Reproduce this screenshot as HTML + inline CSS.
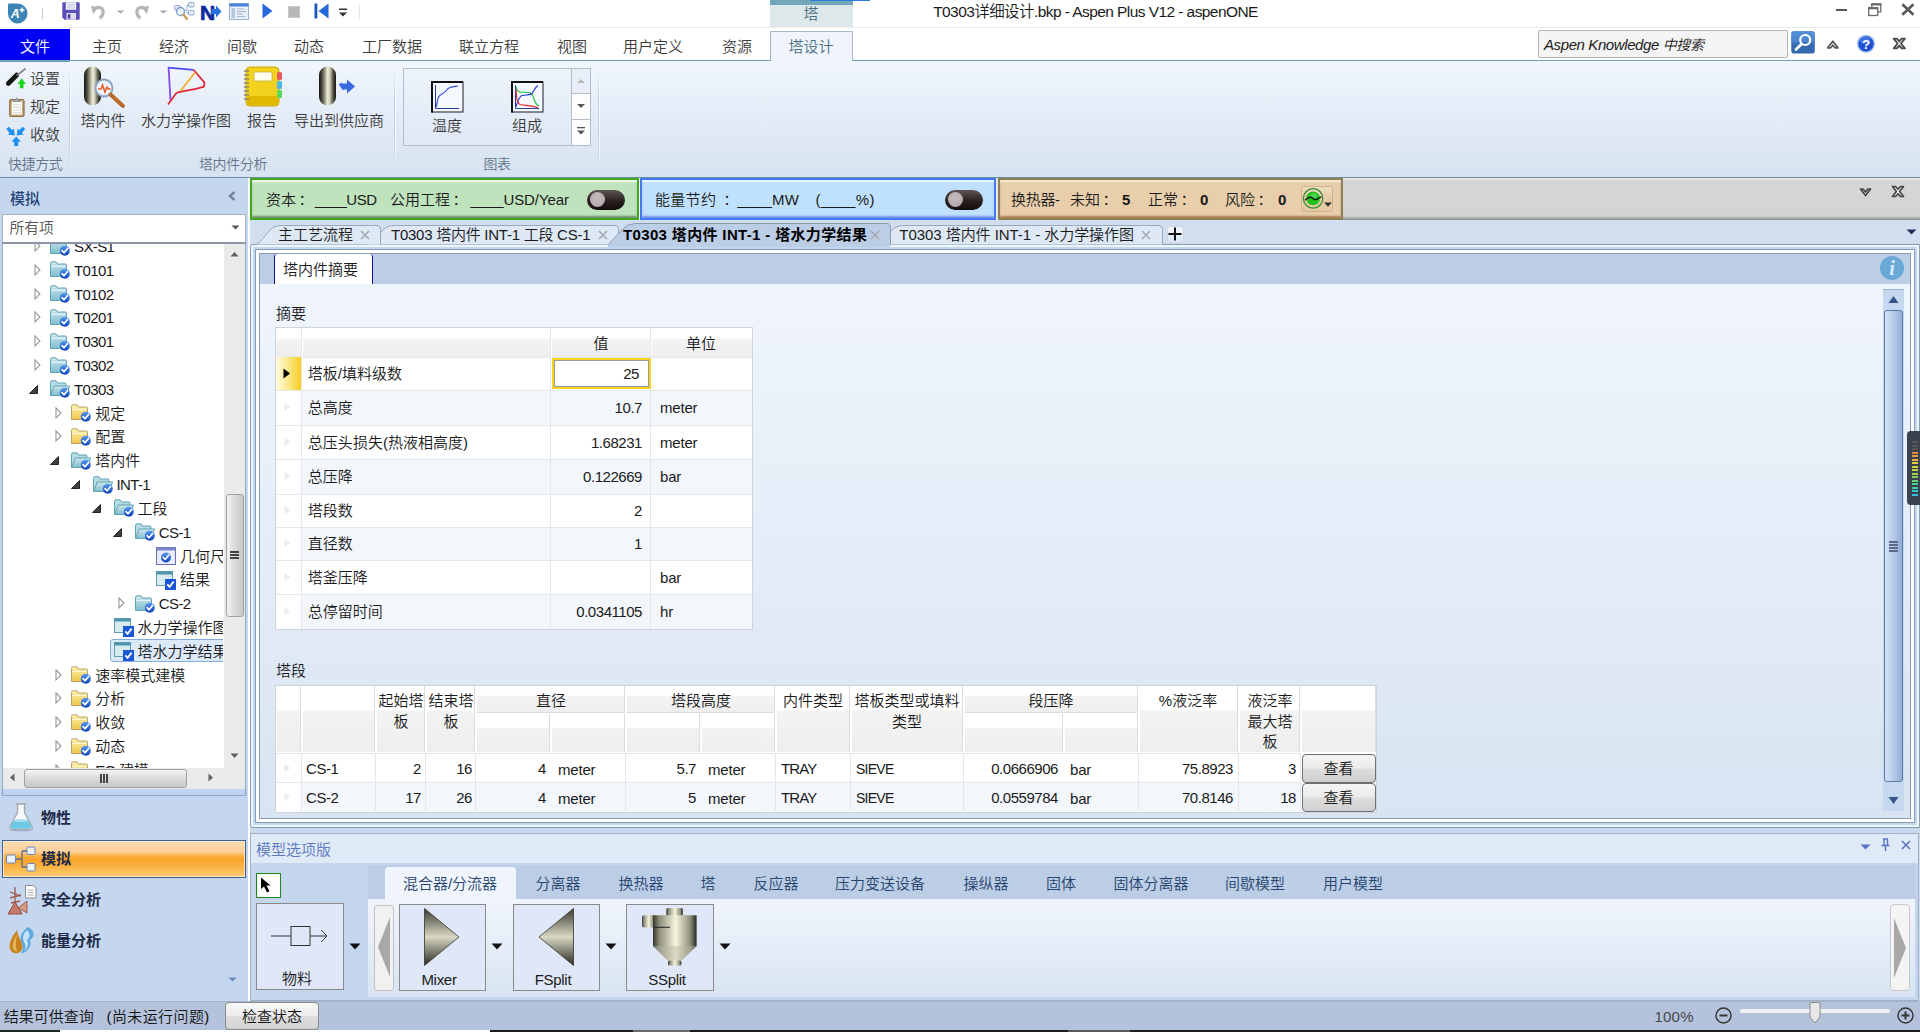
<!DOCTYPE html>
<html lang="zh-CN"><head><meta charset="utf-8"><title>T0303详细设计.bkp - Aspen Plus V12 - aspenONE</title>
<style>
html,body{margin:0;padding:0}
body{width:1920px;height:1032px;position:relative;overflow:hidden;background:#c5d7ee;
font-family:"Liberation Sans","Noto Sans CJK SC",sans-serif;font-size:15px;font-weight:350;color:#1e1e1e}
body div,body svg{position:absolute;box-sizing:border-box}
.t{white-space:nowrap}
svg{overflow:visible}
svg text{font-family:"Liberation Sans","Noto Sans CJK SC",sans-serif}
</style></head><body>
<svg width="0" height="0" style="left:0;top:0"><defs>
<linearGradient id="gBlueBall" x1="0" y1="0" x2="0" y2="1"><stop offset="0" stop-color="#5b9bf0"/><stop offset="1" stop-color="#0a3fb5"/></linearGradient>
<linearGradient id="gTeal" x1="0" y1="0" x2="0" y2="1"><stop offset="0" stop-color="#cfe8ee"/><stop offset="1" stop-color="#7fbccc"/></linearGradient>
<linearGradient id="gYel" x1="0" y1="0" x2="0" y2="1"><stop offset="0" stop-color="#fdf0b0"/><stop offset="1" stop-color="#efc84a"/></linearGradient>
<linearGradient id="gMetal" x1="0" y1="0" x2="1" y2="0"><stop offset="0" stop-color="#14140f"/><stop offset="0.18" stop-color="#4a4a3e"/><stop offset="0.5" stop-color="#eaead4"/><stop offset="0.62" stop-color="#d4d4be"/><stop offset="0.85" stop-color="#4a4a3e"/><stop offset="1" stop-color="#14140f"/></linearGradient>
<linearGradient id="gMetal2" x1="0" y1="0" x2="1" y2="0"><stop offset="0" stop-color="#34342a"/><stop offset="0.14" stop-color="#8c8c7a"/><stop offset="0.52" stop-color="#f6f6de"/><stop offset="0.86" stop-color="#8c8c7a"/><stop offset="1" stop-color="#26261e"/></linearGradient>
<linearGradient id="gCone" x1="0" y1="0" x2="0" y2="1"><stop offset="0" stop-color="#3a3a30"/><stop offset="0.5" stop-color="#d8d8c4"/><stop offset="1" stop-color="#2a2a22"/></linearGradient>
<linearGradient id="gBtn" x1="0" y1="0" x2="0" y2="1"><stop offset="0" stop-color="#f6f6f6"/><stop offset="0.5" stop-color="#e8e8e8"/><stop offset="0.5" stop-color="#dcdcdc"/><stop offset="1" stop-color="#d0d0d0"/></linearGradient>
<g id="chk"><circle cx="0" cy="0" r="5" fill="url(#gBlueBall)"/><path d="M-2.8,-0.2 L-0.8,2 L2.8,-2.4" fill="none" stroke="#fff" stroke-width="1.6" stroke-linecap="round" stroke-linejoin="round"/></g>
<symbol id="fb" viewBox="0 0 21 19" overflow="visible"><path d="M0.5,2.5 Q0.5,0.8 2,0.8 L6,0.8 L7.6,3 L15.5,3 Q16.5,3 16.5,4.2 L16.5,15.5 L0.5,15.5 Z" fill="url(#gTeal)" stroke="#5fa3b5" stroke-width="1"/><path d="M1.5,5.5 L15.5,5.5" stroke="#e6f4f7" stroke-width="1"/><use href="#chk" x="14.8" y="12.8"/></symbol>
<symbol id="fbo" viewBox="0 0 21 19" overflow="visible"><path d="M0.5,2.5 Q0.5,0.8 2,0.8 L6,0.8 L7.6,3 L15,3 Q16,3 16,4.2 L16,6 L0.5,15.5 Z" fill="#b5dbe4" stroke="#5fa3b5" stroke-width="1"/><path d="M0.6,15.5 L4.2,6 L19.5,6 L16.5,15.5 Z" fill="url(#gTeal)" stroke="#5fa3b5" stroke-width="1"/><use href="#chk" x="14.8" y="12.8"/></symbol>
<symbol id="fy" viewBox="0 0 21 19" overflow="visible"><path d="M0.5,2.5 Q0.5,0.8 2,0.8 L6,0.8 L7.6,3 L15.5,3 Q16.5,3 16.5,4.2 L16.5,15.5 L0.5,15.5 Z" fill="url(#gYel)" stroke="#b9a06a" stroke-width="1"/><path d="M1.5,5.5 L15.5,5.5" stroke="#fff8d8" stroke-width="1"/><use href="#chk" x="14.8" y="12.8"/></symbol>
<symbol id="frm" viewBox="0 0 21 19" overflow="visible"><rect x="0.5" y="0.5" width="16" height="14" fill="#d6ecf0" stroke="#5f9fb0"/><rect x="0.5" y="0.5" width="16" height="3" fill="#4f96aa"/><rect x="9" y="8" width="11" height="11" fill="#1a56d6"/><path d="M11.3,13.3 L13.6,15.8 L17.6,10.6" fill="none" stroke="#fff" stroke-width="1.8"/></symbol>
<symbol id="frm2" viewBox="0 0 21 19" overflow="visible"><rect x="0.5" y="0.5" width="19" height="17" fill="#e9ecfa" stroke="#6a6fb5"/><rect x="0.5" y="0.5" width="19" height="3" fill="#7f86c8"/><use href="#chk" x="10" y="10.5"/></symbol>
<symbol id="ar" viewBox="0 0 8 12" overflow="visible"><path d="M1,1 L6,6 L1,11 Z" fill="#fff" stroke="#989898" stroke-width="1.100"/></symbol>
<symbol id="ad" viewBox="0 0 10 10" overflow="visible"><path d="M8.5,0.5 L8.5,8.5 L0.5,8.5 Z" fill="#404040" stroke="#262626" stroke-width="1"/></symbol>
</defs></svg>
<div style="left:0px;top:0px;width:1920px;height:29px;background:#fff"></div>
<div style="left:0px;top:27px;width:1920px;height:1px;background:#e9ece9"></div>
<div style="left:770px;top:0px;width:83px;height:27px;background:#dde8ea"></div>
<div style="left:770px;top:0px;width:83px;height:5px;background:#72a6b8"></div>
<div style="left:810px;top:0px;width:60px;height:1px;background:#2a7be0"></div>
<div class="t" style="top:4px;line-height:20px;font-size:15px;color:#4a7080;left:811px;transform:translateX(-50%);">塔</div>
<div class="t" style="top:1.5px;line-height:20px;font-size:15.5px;color:#1a1a1a;left:1095.5px;transform:translateX(-50%);letter-spacing:-0.57px">T0303详细设计.bkp - Aspen Plus V12 - aspenONE</div>
<div style="left:1836px;top:9px;width:11px;height:2px;background:#555"></div>
<svg style="left:1868px;top:3px;" width="14" height="13" viewBox="0 0 14 13"><path d="M3.800,4 V0.800 H12.800 V8.800 H10" fill="none" stroke="#6a6a6a" stroke-width="1.300"/><path d="M3.200,1.500 H13.400" stroke="#6a6a6a" stroke-width="2"/><rect x="0.700" y="4.700" width="9" height="7.800" fill="#fff" stroke="#6a6a6a" stroke-width="1.300"/><path d="M0.100,5.300 H10.300" stroke="#6a6a6a" stroke-width="2"/></svg>
<svg style="left:1900.5px;top:3px;" width="14" height="13" viewBox="0 0 14 13"><path d="M1.300,1.300 L12.500,11.800 M12.500,1.300 L1.300,11.800" stroke="#5c5c5c" stroke-width="2.700" stroke-linecap="butt"/></svg>
<svg style="left:7px;top:3px;" width="22" height="21" viewBox="0 0 22 21"><path d="M1,1.500 Q1,0.500 2.500,0.500 H10.500 A10,10 0 0 1 20.500,10.500 A10,10 0 0 1 10.500,20.500 A9.800,9.800 0 0 1 1,10.500 Z" fill="#3d84b6"/><text x="3.800" y="15.300" font-size="12.500" font-weight="bold" font-style="italic" fill="#fff">A</text><path d="M15,3.800 l1,2.200 l2.200,1 l-2.200,1 l-1,2.200 l-1,-2.200 l-2.200,-1 l2.200,-1 z" fill="#fff"/></svg>
<div style="left:42px;top:8px;width:1px;height:11px;background:#c8c8c8"></div>
<svg style="left:62px;top:2px;" width="18" height="18" viewBox="0 0 18 18"><path d="M1.500,0.300 H16.500 Q17.700,0.300 17.700,1.500 V16.500 Q17.700,17.700 16.500,17.700 H2.500 L0.300,15.500 V1.500 Q0.300,0.300 1.500,0.300 Z" fill="#5a50b8"/><rect x="3.800" y="0.300" width="10.400" height="7.500" fill="#f4f4fb"/><path d="M5,2.300 h8 M5,4.200 h8 M5,6 h8" stroke="#c4c4e0" stroke-width="0.900"/><rect x="4.500" y="11" width="9.500" height="6.700" fill="#dedeee"/><rect x="5.800" y="12.200" width="2.600" height="4.500" fill="#4a40a8"/></svg>
<svg style="left:91px;top:4px;" width="16" height="16" viewBox="0 0 16 16"><path d="M3,5.5 C8,1.5 13,4 12,9 C11.5,12 10,13.5 8.5,14" fill="none" stroke="#b6b6b6" stroke-width="3.200"/><path d="M0,2 L7.500,3 L2,10 Z" fill="#b6b6b6"/></svg>
<svg style="left:116px;top:8.5px;" width="10" height="5" viewBox="0 0 10 5"><path d="M0.5,1.5 h8 l-4,3 z" fill="#a8a8a8"/></svg>
<svg style="left:133px;top:4px;" width="16" height="16" viewBox="0 0 16 16"><path d="M13,5.5 C8,1.5 3,4 4,9 C4.5,12 6,13.5 7.5,14" fill="none" stroke="#b6b6b6" stroke-width="3.200"/><path d="M16,2 L8.500,3 L14,10 Z" fill="#b6b6b6"/></svg>
<svg style="left:159px;top:8.5px;" width="10" height="5" viewBox="0 0 10 5"><path d="M0.5,1.5 h8 l-4,3 z" fill="#a8a8a8"/></svg>
<svg style="left:173px;top:2px;" width="22" height="19" viewBox="0 0 22 19"><path d="M9,8 h5 v-5 h3 M14,8 v3 h3" fill="none" stroke="#9ab4d0" stroke-width="1"/><rect x="15.5" y="0.5" width="5.5" height="4.5" rx="1" fill="#e3edf8" stroke="#8aa8cc"/><rect x="15.5" y="8.5" width="5.5" height="4.5" rx="1" fill="#e3edf8" stroke="#8aa8cc"/><rect x="1.500" y="3.500" width="5.500" height="4.500" rx="1" fill="#e3edf8" stroke="#8aa8cc"/><circle cx="7.500" cy="9.500" r="4" fill="#e8f2fb" fill-opacity="0.8" stroke="#7d9cc0" stroke-width="1.300"/><path d="M10.5,12.500 L14,17" stroke="#c89a50" stroke-width="2.200" stroke-linecap="round"/></svg>
<svg style="left:200px;top:3px;" width="22" height="17" viewBox="0 0 22 17"><text x="0" y="16.500" font-size="21" font-weight="bold" fill="#0c2c9c" stroke="#0c2c9c" stroke-width="0.700">N</text><path d="M11,6 h5 v-3.500 l5.500,6 l-5.500,6 v-3.500 h-5 z" fill="#2a6fe0"/></svg>
<svg style="left:229px;top:3px;" width="20" height="17" viewBox="0 0 20 17"><rect x="0.5" y="0.5" width="19" height="16" fill="#e6eef8" stroke="#9ab4d4"/><rect x="0.5" y="0.5" width="19" height="3" fill="#4a86d8"/><rect x="2.5" y="5" width="3.500" height="10" fill="#b4c8e0"/><path d="M8,6 h7 M8,8.500 h9 M8,11 h6 M8,13.500 h8" stroke="#a8b8cc" stroke-width="1"/></svg>
<svg style="left:262px;top:3px;" width="11" height="16" viewBox="0 0 11 16"><path d="M0.500,0.500 L10.500,8 L0.500,15.500 Z" fill="#2468dc"/></svg>
<div style="left:288px;top:6px;width:12px;height:12px;background:#b8b8b8;border:1px solid #c8c8c8"></div>
<svg style="left:314px;top:3px;" width="15" height="16" viewBox="0 0 15 16"><rect x="0.500" y="0.500" width="2.800" height="15" fill="#1e56b8"/><path d="M14.500,0.500 L4.500,8 L14.500,15.500 Z" fill="#2468dc"/></svg>
<svg style="left:338px;top:8px;" width="10" height="9" viewBox="0 0 10 9"><rect x="1" y="0.500" width="8" height="1.500" fill="#333"/><path d="M1,4.500 h8 l-4,4 z" fill="#333"/></svg>
<div style="left:359px;top:5px;width:1px;height:14px;background:#e4e4e4"></div>
<div style="left:0px;top:28px;width:1920px;height:33px;background:#fff"></div>
<div style="left:0px;top:29px;width:70px;height:32px;background:#0000f5"></div>
<div class="t" style="top:37px;line-height:20px;font-size:15px;color:#fff;left:35px;transform:translateX(-50%);">文件</div>
<div class="t" style="top:37px;line-height:20px;font-size:15px;color:#3c3c3c;left:107px;transform:translateX(-50%);">主页</div>
<div class="t" style="top:37px;line-height:20px;font-size:15px;color:#3c3c3c;left:174px;transform:translateX(-50%);">经济</div>
<div class="t" style="top:37px;line-height:20px;font-size:15px;color:#3c3c3c;left:242px;transform:translateX(-50%);">间歇</div>
<div class="t" style="top:37px;line-height:20px;font-size:15px;color:#3c3c3c;left:309px;transform:translateX(-50%);">动态</div>
<div class="t" style="top:37px;line-height:20px;font-size:15px;color:#3c3c3c;left:392px;transform:translateX(-50%);">工厂数据</div>
<div class="t" style="top:37px;line-height:20px;font-size:15px;color:#3c3c3c;left:489px;transform:translateX(-50%);">联立方程</div>
<div class="t" style="top:37px;line-height:20px;font-size:15px;color:#3c3c3c;left:572px;transform:translateX(-50%);">视图</div>
<div class="t" style="top:37px;line-height:20px;font-size:15px;color:#3c3c3c;left:653px;transform:translateX(-50%);">用户定义</div>
<div class="t" style="top:37px;line-height:20px;font-size:15px;color:#3c3c3c;left:737px;transform:translateX(-50%);">资源</div>
<div style="left:770px;top:31px;width:83px;height:31px;background:#f0f5fd;border:1px solid #a9b7c6;border-bottom:none"></div>
<div class="t" style="top:37px;line-height:20px;font-size:15px;color:#4a7080;left:811px;transform:translateX(-50%);">塔设计</div>
<div style="left:1538px;top:30px;width:250px;height:28px;background:#f4f4f4;border:1px solid #b4b4b4;border-radius:2px"></div>
<div class="t" style="top:35px;line-height:20px;font-size:15px;color:#1a1a1a;left:1544px;font-style:italic;letter-spacing:-0.4px">Aspen Knowledge <span style="font-size:14px">中搜索</span></div>
<svg style="left:1791px;top:31px;" width="24" height="23" viewBox="0 0 24 23"><rect x="0.300" y="0.300" width="23.500" height="22.300" rx="2.500" fill="#3569ae"/><rect x="0.300" y="0.300" width="23.500" height="11" rx="2.500" fill="#5a9ae2" fill-opacity="0.750"/><rect x="0.300" y="6" width="23.500" height="8" fill="#4580c8" fill-opacity="0.500"/><circle cx="14.200" cy="9" r="5" fill="none" stroke="#fff" stroke-width="2.200"/><path d="M10.300,13.200 L5,18.500" stroke="#fff" stroke-width="2.800" stroke-linecap="round"/></svg>
<svg style="left:1826px;top:39px;" width="14" height="11" viewBox="0 0 14 11"><path d="M1.700,8.800 L6.800,2.200 L11.900,8.800 L9,8.800 L6.800,6.200 L4.600,8.800 Z" fill="#fff" stroke="#555" stroke-width="1.700" stroke-linejoin="round"/></svg>
<svg style="left:1856px;top:34px;" width="20" height="20" viewBox="0 0 20 20"><circle cx="10" cy="9.800" r="8.400" fill="#1d4fd2" stroke="#a4c0ec" stroke-width="1.500"/><ellipse cx="9" cy="6.500" rx="5.500" ry="3.800" fill="#5a8af0" fill-opacity="0.550"/><text x="10.200" y="14.800" font-size="13.500" font-weight="bold" fill="#fff" text-anchor="middle">?</text></svg>
<svg style="left:1892px;top:37px;" width="15" height="13" viewBox="0 0 15 13"><path d="M1.700,1.600 L4.900,1.600 L7.300,4.400 L9.700,1.600 L12.900,1.600 L9,6.500 L12.900,11.400 L9.700,11.400 L7.300,8.600 L4.900,11.400 L1.700,11.400 L5.600,6.500 Z" fill="#fff" stroke="#4c4c4c" stroke-width="1.900" stroke-linejoin="round"/></svg>
<div style="left:0px;top:60px;width:1920px;height:117.5px;background:linear-gradient(#f1f6fe,#e4ecf7 45%,#d7e3f1);border-top:1.500px solid #6fa2b6;border-bottom:1.500px solid #6c8d9d"></div>
<div style="left:0px;top:60px;width:70px;height:1.5px;background:#6fa2b6"></div>
<div style="left:771px;top:60px;width:81px;height:1.5px;background:#f0f5fd"></div>
<div style="left:69px;top:66px;width:1px;height:106px;background:linear-gradient(rgba(200,212,228,0),#c4d0e2 30%,#c4d0e2 70%,rgba(200,212,228,0))"></div>
<div style="left:70px;top:66px;width:1px;height:106px;background:linear-gradient(rgba(255,255,255,0),#f6f9fd 30%,#f6f9fd 70%,rgba(255,255,255,0))"></div>
<div style="left:394px;top:66px;width:1px;height:106px;background:linear-gradient(rgba(200,212,228,0),#c4d0e2 30%,#c4d0e2 70%,rgba(200,212,228,0))"></div>
<div style="left:395px;top:66px;width:1px;height:106px;background:linear-gradient(rgba(255,255,255,0),#f6f9fd 30%,#f6f9fd 70%,rgba(255,255,255,0))"></div>
<div style="left:598px;top:66px;width:1px;height:106px;background:linear-gradient(rgba(200,212,228,0),#c4d0e2 30%,#c4d0e2 70%,rgba(200,212,228,0))"></div>
<div style="left:599px;top:66px;width:1px;height:106px;background:linear-gradient(rgba(255,255,255,0),#f6f9fd 30%,#f6f9fd 70%,rgba(255,255,255,0))"></div>
<svg style="left:0px;top:62px;" width="30" height="30" viewBox="0 0 30 30"><path d="M8.300,21.500 L16.800,13" stroke="#151515" stroke-width="4.600" stroke-linecap="round"/><path d="M17.500,13 L25,7" stroke="#8a8a8a" stroke-width="1.800" stroke-linecap="round"/><path d="M21.700,16.300 l4.200,5.700 h-2.400 v4.200 h-3.600 v-4.200 h-2.400 z" fill="#18d818"/></svg>
<div class="t" style="top:69px;line-height:20px;font-size:15px;color:#3c3c3c;left:30px;">设置</div>
<svg style="left:8px;top:96px;" width="18" height="22" viewBox="0 0 18 22"><rect x="1.700" y="3.500" width="14.300" height="17" rx="1.500" fill="#c9a878" stroke="#8a6c44" stroke-width="1.200"/><rect x="3.800" y="5.500" width="10.200" height="13" fill="#fcfcf8"/><path d="M5,9 h8 M5,11.500 h8 M5,14 h8 M5,16.500 h8" stroke="#d8d8d4" stroke-width="1"/><path d="M5.500,5.500 Q5.500,3.500 7.500,3.300 Q8.800,0.800 10.200,3.300 Q12.200,3.500 12.200,5.500 Z" fill="#a8a8a8" stroke="#777" stroke-width="0.700"/></svg>
<div class="t" style="top:97px;line-height:20px;font-size:15px;color:#3c3c3c;left:30px;">规定</div>
<svg style="left:5px;top:126px;" width="22" height="21" viewBox="0 0 22 21"><g fill="#1e8ef0"><path d="M1.300,3 L3.800,0.700 L7.300,4.200 L8.800,2.600 L9.800,9.600 L2.800,8.600 L4.600,6.700 Z"/><path d="M20.200,3 L17.700,0.700 L14.200,4.200 L12.700,2.600 L11.700,9.600 L18.700,8.600 L16.900,6.700 Z"/><path d="M11.200,10.500 l4.800,5.300 h-2.800 v4.200 h-4 v-4.200 h-2.800 z"/></g></svg>
<div class="t" style="top:125px;line-height:20px;font-size:15px;color:#3c3c3c;left:30px;">收敛</div>
<div class="t" style="top:154px;line-height:20px;font-size:14px;color:#65748a;left:8px;letter-spacing:-0.4px">快捷方式</div>
<svg style="left:83px;top:66px;" width="44" height="42" viewBox="0 0 44 42"><rect x="1" y="0.500" width="17" height="39" rx="8.500" fill="url(#gMetal)"/><circle cx="21" cy="22" r="8.500" fill="#eef4fc" stroke="#8aa0c0" stroke-width="1.800"/><path d="M15,23 l3,0 l1.500,-4 l2.500,7 l2,-5 l1.500,2 l2,0" fill="none" stroke="#e85a2a" stroke-width="1.600"/><path d="M27.500,28.500 L40,40" stroke="#b86a28" stroke-width="4" stroke-linecap="round"/></svg>
<div class="t" style="top:111px;line-height:20px;font-size:15px;color:#3c3c3c;left:103px;transform:translateX(-50%);">塔内件</div>
<svg style="left:160px;top:60px;" width="50" height="50" viewBox="0 0 50 50"><path d="M8,7.700 L33.600,9.800" stroke="#4a4af0" stroke-width="1.800" fill="none"/><path d="M8.600,7.700 L10.500,40.400" stroke="#8a4af0" stroke-width="1.800" fill="none"/><path d="M33.600,9.800 L44.500,22.600 L44,26.600 C36,29.500 22,31 16.400,33 L8,44.400" stroke="#e02838" stroke-width="1.700" fill="none" stroke-linejoin="round"/><path d="M35,12.500 L20.500,31" stroke="#f5a818" stroke-width="1.600" fill="none"/></svg>
<div class="t" style="top:111px;line-height:20px;font-size:15px;color:#3c3c3c;left:186px;transform:translateX(-50%);">水力学操作图</div>
<svg style="left:243px;top:66px;" width="40" height="42" viewBox="0 0 40 42"><rect x="3" y="1" width="33" height="39" rx="4" fill="#f2d21c" stroke="#c8a800" stroke-width="1"/><rect x="3" y="30" width="33" height="10" rx="4" fill="#e0b800"/><rect x="34" y="6" width="5" height="8" rx="1.500" fill="#e85a5a"/><rect x="34" y="15" width="5" height="8" rx="1.500" fill="#4ab8e8"/><rect x="34" y="24" width="5" height="8" rx="1.500" fill="#5ad85a"/><rect x="11" y="6" width="18" height="9" rx="1" fill="#fffef0" stroke="#c8b040" stroke-width="0.800"/><path d="M1,5 h5 M1,9 h5 M1,13 h5 M1,17 h5 M1,21 h5 M1,25 h5 M1,29 h5 M1,33 h5" stroke="#8a8a6a" stroke-width="1.600"/></svg>
<div class="t" style="top:111px;line-height:20px;font-size:15px;color:#3c3c3c;left:262px;transform:translateX(-50%);">报告</div>
<svg style="left:318px;top:66px;" width="40" height="42" viewBox="0 0 40 42"><rect x="1" y="0.500" width="17" height="39" rx="8.500" fill="url(#gMetal)"/><path d="M22,17.500 h7 v-4 l8,7 l-8,7 v-4 h-3 z" fill="#3a6ae0"/><path d="M22,17.500 l4,6" stroke="#3a6ae0" stroke-width="3"/></svg>
<div class="t" style="top:111px;line-height:20px;font-size:15px;color:#3c3c3c;left:339px;transform:translateX(-50%);">导出到供应商</div>
<div class="t" style="top:154px;line-height:20px;font-size:14px;color:#65748a;left:233px;transform:translateX(-50%);letter-spacing:-0.4px">塔内件分析</div>
<div style="left:403px;top:68px;width:188px;height:78px;background:linear-gradient(#edf3fb,#dfe8f5);border:1px solid #b4bccc"></div>
<div style="left:571px;top:68px;width:20px;height:78px;background:#fdfdfe;border:1px solid #b4bccc"></div>
<div style="left:572px;top:69px;width:18px;height:24px;background:#e9eff9"></div>
<div style="left:571px;top:93px;width:20px;height:1px;background:#b4bccc"></div>
<div style="left:571px;top:119px;width:20px;height:1px;background:#b4bccc"></div>
<svg style="left:576px;top:78px;" width="10" height="6" viewBox="0 0 10 6"><path d="M1,5 L5,1 L9,5 Z" fill="#b8b8b8"/></svg>
<svg style="left:576px;top:103px;" width="10" height="6" viewBox="0 0 10 6"><path d="M1,1 L5,5 L9,1 Z" fill="#555"/></svg>
<svg style="left:576px;top:126px;" width="10" height="10" viewBox="0 0 10 10"><rect x="1" y="1" width="8" height="1.300" fill="#555"/><path d="M1,4.500 L5,8.500 L9,4.500 Z" fill="#555"/></svg>
<svg style="left:431px;top:81px;" width="33" height="32" viewBox="0 0 33 32"><rect x="1" y="1" width="31" height="30" fill="#f4f8ff" stroke="#1a1a2a" stroke-width="1"/><path d="M0,1 H32 M1,0 V31.500" stroke="#111" stroke-width="2"/><path d="M4.500,4 V27.500 H28" fill="none" stroke="#2a3a90" stroke-width="1"/><path d="M5.500,26 C6.500,16 8,14.500 11,13 C15,11.500 15.500,7.500 19,6.500 C22,5.500 24,5.500 27,5" fill="none" stroke="#2848e0" stroke-width="1.100"/></svg>
<div class="t" style="top:116px;line-height:20px;font-size:15px;color:#3c3c3c;left:447px;transform:translateX(-50%);">温度</div>
<svg style="left:511px;top:81px;" width="33" height="32" viewBox="0 0 33 32"><rect x="1" y="1" width="31" height="30" fill="#f4f8ff" stroke="#1a1a2a" stroke-width="1"/><path d="M0,1 H32 M1,0 V31.500" stroke="#111" stroke-width="2"/><path d="M4.500,4 V27.500 H28" fill="none" stroke="#2a3a90" stroke-width="1"/><path d="M5,5.500 C6,10 7,11 10,11.200 C15,11.500 19,11 21,13 C23,16 23,23 28,25" fill="none" stroke="#18c030" stroke-width="1.100"/><path d="M5,25.500 C7,20 8,15.500 11,14.500 C15,13.500 19,14.500 21,12.500 C23,10 24,6 27,4.500" fill="none" stroke="#2030e0" stroke-width="1.100"/><path d="M5,8 C5.500,18 6,22 9,23.500 C13,24.500 20,24.500 27,26.500" fill="none" stroke="#e02030" stroke-width="1.100"/></svg>
<div class="t" style="top:116px;line-height:20px;font-size:15px;color:#3c3c3c;left:527px;transform:translateX(-50%);">组成</div>
<div class="t" style="top:154px;line-height:20px;font-size:14px;color:#65748a;left:497px;transform:translateX(-50%);letter-spacing:-0.4px">图表</div>
<div style="left:0px;top:177.5px;width:248px;height:824px;background:#c5d7ee"></div>
<div class="t" style="top:189px;line-height:20px;font-size:15px;color:#27457a;left:10px;font-weight:500">模拟</div>
<svg style="left:228px;top:191px;" width="8" height="10" viewBox="0 0 8 10"><path d="M6.500,1 L2,5 L6.500,9" fill="none" stroke="#75839c" stroke-width="2.400"/></svg>
<div style="left:1.5px;top:213.5px;width:244.5px;height:29px;background:#fff;border:1px solid #a8b0bc"></div>
<div class="t" style="top:218px;line-height:20px;font-size:14.8px;color:#555;left:9.5px;">所有项</div>
<svg style="left:231px;top:225px;" width="9" height="5" viewBox="0 0 9 5"><path d="M0.500,0.500 h8 l-4,4 z" fill="#555"/></svg>
<div style="left:2px;top:242px;width:244px;height:548px;background:#fff;border:1px solid #9aa8bc;border-top:2px solid #8a96a8"></div>
<div style="left:2px;top:789px;width:244px;height:7px;background:#c0d4ef;border:1px solid #8fa8cc;border-top:none"></div>
<div style="left:3px;top:244px;width:220px;height:524px;overflow:hidden">
<svg style="left:31px;top:-4px" width="8" height="12"><use href="#ar"/></svg>
<svg style="left:47px;top:-6.5px" width="21" height="19"><use href="#fb"/></svg>
<div class="t" style="left:71px;top:-7px;line-height:20px;font-size:15px;color:#1a1a1a;letter-spacing:-0.6px;">SX-S1</div>
<svg style="left:31px;top:19.81px" width="8" height="12"><use href="#ar"/></svg>
<svg style="left:47px;top:17.31px" width="21" height="19"><use href="#fb"/></svg>
<div class="t" style="left:71px;top:16.81px;line-height:20px;font-size:15px;color:#1a1a1a;letter-spacing:-0.6px;">T0101</div>
<svg style="left:31px;top:43.62px" width="8" height="12"><use href="#ar"/></svg>
<svg style="left:47px;top:41.12px" width="21" height="19"><use href="#fb"/></svg>
<div class="t" style="left:71px;top:40.62px;line-height:20px;font-size:15px;color:#1a1a1a;letter-spacing:-0.6px;">T0102</div>
<svg style="left:31px;top:67.43px" width="8" height="12"><use href="#ar"/></svg>
<svg style="left:47px;top:64.93px" width="21" height="19"><use href="#fb"/></svg>
<div class="t" style="left:71px;top:64.43px;line-height:20px;font-size:15px;color:#1a1a1a;letter-spacing:-0.6px;">T0201</div>
<svg style="left:31px;top:91.24px" width="8" height="12"><use href="#ar"/></svg>
<svg style="left:47px;top:88.74px" width="21" height="19"><use href="#fb"/></svg>
<div class="t" style="left:71px;top:88.24px;line-height:20px;font-size:15px;color:#1a1a1a;letter-spacing:-0.6px;">T0301</div>
<svg style="left:31px;top:115.05px" width="8" height="12"><use href="#ar"/></svg>
<svg style="left:47px;top:112.55px" width="21" height="19"><use href="#fb"/></svg>
<div class="t" style="left:71px;top:112.05px;line-height:20px;font-size:15px;color:#1a1a1a;letter-spacing:-0.6px;">T0302</div>
<svg style="left:26px;top:140.86px" width="10" height="10"><use href="#ad"/></svg>
<svg style="left:47px;top:136.36px" width="21" height="19"><use href="#fbo"/></svg>
<div class="t" style="left:71px;top:135.86px;line-height:20px;font-size:15px;color:#1a1a1a;letter-spacing:-0.6px;">T0303</div>
<svg style="left:52px;top:162.67px" width="8" height="12"><use href="#ar"/></svg>
<svg style="left:68.25px;top:160.17px" width="21" height="19"><use href="#fy"/></svg>
<div class="t" style="left:92.2px;top:159.67px;line-height:20px;font-size:15px;color:#1a1a1a;">规定</div>
<svg style="left:52px;top:186.48px" width="8" height="12"><use href="#ar"/></svg>
<svg style="left:68.25px;top:183.98px" width="21" height="19"><use href="#fy"/></svg>
<div class="t" style="left:92.2px;top:183.48px;line-height:20px;font-size:15px;color:#1a1a1a;">配置</div>
<svg style="left:47px;top:212.29px" width="10" height="10"><use href="#ad"/></svg>
<svg style="left:68.25px;top:207.79px" width="21" height="19"><use href="#fbo"/></svg>
<div class="t" style="left:92.2px;top:207.29px;line-height:20px;font-size:15px;color:#1a1a1a;">塔内件</div>
<svg style="left:68px;top:236.1px" width="10" height="10"><use href="#ad"/></svg>
<svg style="left:89.5px;top:231.6px" width="21" height="19"><use href="#fbo"/></svg>
<div class="t" style="left:113.4px;top:231.1px;line-height:20px;font-size:15px;color:#1a1a1a;letter-spacing:-0.6px;">INT-1</div>
<svg style="left:89px;top:259.91px" width="10" height="10"><use href="#ad"/></svg>
<svg style="left:110.75px;top:255.41px" width="21" height="19"><use href="#fbo"/></svg>
<div class="t" style="left:134.6px;top:254.91px;line-height:20px;font-size:15px;color:#1a1a1a;">工段</div>
<svg style="left:110px;top:283.72px" width="10" height="10"><use href="#ad"/></svg>
<svg style="left:132px;top:279.22px" width="21" height="19"><use href="#fbo"/></svg>
<div class="t" style="left:155.8px;top:278.72px;line-height:20px;font-size:15px;color:#1a1a1a;letter-spacing:-0.6px;">CS-1</div>
<svg style="left:153.25px;top:303.03px" width="21" height="19"><use href="#frm2"/></svg>
<div class="t" style="left:177px;top:302.53px;line-height:20px;font-size:15px;color:#1a1a1a;">几何尺寸</div>
<svg style="left:153.25px;top:326.84px" width="21" height="19"><use href="#frm"/></svg>
<div class="t" style="left:177px;top:326.34px;line-height:20px;font-size:15px;color:#1a1a1a;">结果</div>
<svg style="left:115px;top:353.15px" width="8" height="12"><use href="#ar"/></svg>
<svg style="left:132px;top:350.65px" width="21" height="19"><use href="#fb"/></svg>
<div class="t" style="left:155.8px;top:350.15px;line-height:20px;font-size:15px;color:#1a1a1a;letter-spacing:-0.6px;">CS-2</div>
<svg style="left:110.75px;top:374.46px" width="21" height="19"><use href="#frm"/></svg>
<div class="t" style="left:134.6px;top:373.96px;line-height:20px;font-size:15px;color:#1a1a1a;">水力学操作图</div>
<div style="left:106.75px;top:395.27px;width:140px;height:23px;background:#dce9f9;border:1px solid #84acdd;border-radius:3px"></div>
<svg style="left:110.75px;top:398.27px" width="21" height="19"><use href="#frm"/></svg>
<div class="t" style="left:134.6px;top:397.77px;line-height:20px;font-size:15px;color:#1a1a1a;">塔水力学结果</div>
<svg style="left:52px;top:424.58px" width="8" height="12"><use href="#ar"/></svg>
<svg style="left:68.25px;top:422.08px" width="21" height="19"><use href="#fy"/></svg>
<div class="t" style="left:92.2px;top:421.58px;line-height:20px;font-size:15px;color:#1a1a1a;">速率模式建模</div>
<svg style="left:52px;top:448.39px" width="8" height="12"><use href="#ar"/></svg>
<svg style="left:68.25px;top:445.89px" width="21" height="19"><use href="#fy"/></svg>
<div class="t" style="left:92.2px;top:445.39px;line-height:20px;font-size:15px;color:#1a1a1a;">分析</div>
<svg style="left:52px;top:472.2px" width="8" height="12"><use href="#ar"/></svg>
<svg style="left:68.25px;top:469.7px" width="21" height="19"><use href="#fy"/></svg>
<div class="t" style="left:92.2px;top:469.2px;line-height:20px;font-size:15px;color:#1a1a1a;">收敛</div>
<svg style="left:52px;top:496.01px" width="8" height="12"><use href="#ar"/></svg>
<svg style="left:68.25px;top:493.51px" width="21" height="19"><use href="#fy"/></svg>
<div class="t" style="left:92.2px;top:493.01px;line-height:20px;font-size:15px;color:#1a1a1a;">动态</div>
<svg style="left:52px;top:519.82px" width="8" height="12"><use href="#ar"/></svg>
<svg style="left:68.25px;top:517.32px" width="21" height="19"><use href="#fy"/></svg>
<div class="t" style="left:92.2px;top:516.82px;line-height:20px;font-size:15px;color:#1a1a1a;letter-spacing:-0.6px;">EO 建模</div>
</div>
<div style="left:224px;top:244px;width:21px;height:524px;background:#eaeaea"></div>
<svg style="left:230px;top:251px;" width="9" height="6" viewBox="0 0 9 6"><path d="M0.500,5.500 L4.500,1 L8.500,5.500 Z" fill="#606060"/></svg>
<svg style="left:230px;top:753px;" width="9" height="6" viewBox="0 0 9 6"><path d="M0.500,0.500 L4.500,5 L8.500,0.500 Z" fill="#606060"/></svg>
<div style="left:226px;top:494px;width:18px;height:123px;background:linear-gradient(90deg,#f4f4f4,#dcdcdc 45%,#c8c8c8);border:1px solid #a0a0a0;border-radius:3px"></div>
<div style="left:230px;top:551px;width:9px;height:1.5px;background:#444"></div>
<div style="left:230px;top:554px;width:9px;height:1.5px;background:#444"></div>
<div style="left:230px;top:557px;width:9px;height:1.5px;background:#444"></div>
<div style="left:3px;top:768px;width:242px;height:21px;background:#eaeaea"></div>
<svg style="left:9px;top:773px;" width="6" height="9" viewBox="0 0 6 9"><path d="M5.500,0.500 L1,4.500 L5.500,8.500 Z" fill="#606060"/></svg>
<svg style="left:208px;top:773px;" width="6" height="9" viewBox="0 0 6 9"><path d="M0.500,0.500 L5,4.500 L0.500,8.500 Z" fill="#606060"/></svg>
<div style="left:24px;top:769px;width:163px;height:18.5px;background:linear-gradient(#f4f4f4,#dcdcdc 45%,#c8c8c8);border:1px solid #a0a0a0;border-radius:3px"></div>
<div style="left:100px;top:774px;width:1.5px;height:9px;background:#444"></div>
<div style="left:103px;top:774px;width:1.5px;height:9px;background:#444"></div>
<div style="left:106px;top:774px;width:1.5px;height:9px;background:#444"></div>
<svg style="left:8px;top:802px;" width="26" height="30" viewBox="0 0 26 30"><ellipse cx="13" cy="27.800" rx="11.500" ry="1.800" fill="#a8a4c8" fill-opacity="0.700"/><path d="M8,2 h10 M9.500,2.500 v8 L2,24.500 Q1,27.500 4,27.500 h18 Q25,27.500 24,24.500 L16.500,10.500 v-8" fill="#f6f8fa" stroke="#a4a8ac" stroke-width="1.300"/><path d="M5.600,18.500 L2.800,24.300 Q2.200,26.700 4.500,26.700 h17 Q23.800,26.700 23.200,24.300 L20.400,18.500 Z" fill="#6cc8e4"/><ellipse cx="13" cy="18.600" rx="7.400" ry="1.500" fill="#a4e0f0"/></svg>
<div class="t" style="top:807.5px;line-height:20px;font-size:15px;color:#1e2c4a;left:41px;font-weight:700">物性</div>
<div style="left:2px;top:840px;width:244px;height:38px;background:linear-gradient(#fddcb0,#fdd09a 30%,#fbb040 42%,#f9a428 52%,#fbb548 75%,#fdcc78);border:1px solid #3d5f9c;box-shadow:inset 0 0 0 1px rgba(255,240,210,.7)"></div>
<svg style="left:6px;top:846px;" width="32" height="26" viewBox="0 0 32 26"><path d="M10,13 h6 M16,5 v16 M16,5 h5 M16,21 h5" fill="none" stroke="#5a6a8a" stroke-width="1.300"/><rect x="0.500" y="9" width="9" height="8" rx="1" fill="#eef4fc" stroke="#6a84b8"/><rect x="21" y="1" width="8" height="7.500" rx="1" fill="#eef4fc" stroke="#6a84b8"/><rect x="21" y="17.500" width="8" height="7.500" rx="1" fill="#eef4fc" stroke="#6a84b8"/></svg>
<div class="t" style="top:848.5px;line-height:20px;font-size:15px;color:#1e2c4a;left:41px;font-weight:700">模拟</div>
<svg style="left:6px;top:884px;" width="32" height="32" viewBox="0 0 32 32"><path d="M9,3 v26 M4,8 l11,4 M4,14 l11,-3 M5,19 l9,-2" stroke="#a0584a" stroke-width="1.300" fill="none"/><path d="M2,30 L9,18 L16,30 Z" fill="#c87868" stroke="#905040"/><path d="M12,24 L21,17 V29 Z" fill="#d89888" stroke="#905040" stroke-width="0.800"/><path d="M19.500,1.500 h8 l2.500,2.500 v10 h-10.500 z" fill="#fff" stroke="#8a8a8a"/><path d="M21.500,6 h6 M21.500,8.500 h6 M21.500,11 h6" stroke="#aaa" stroke-width="1"/></svg>
<div class="t" style="top:890px;line-height:20px;font-size:15px;color:#1e2c4a;left:41px;font-weight:700">安全分析</div>
<svg style="left:8px;top:926px;" width="28" height="30" viewBox="0 0 28 30"><path d="M9,4 C3,12 0.500,18 2,23 C4,29 13,29 14.500,22 C15.500,16 10,12 9,4 Z" fill="#c8821e"/><path d="M9,8 C6,14 4,18 5,22 C6,25 9,26 9,26 C7,20 8,14 9,8 Z" fill="#e8b45a"/><path d="M20,1 C13,6 11,12 14,17 C16,20 15,24 13,28 C20,25 24,20 22,14 C28,10 26,4 20,1 Z" fill="#5aa8e0"/><path d="M19,4 C15,8 14,12 16,16 C18,19 18,22 16,25 C20,22 21,18 19,14 C23,11 22,7 19,4 Z" fill="#c4e2f8"/></svg>
<div class="t" style="top:931px;line-height:20px;font-size:15px;color:#1e2c4a;left:41px;font-weight:700">能量分析</div>
<svg style="left:228px;top:977px;" width="9" height="5" viewBox="0 0 9 5"><path d="M0.500,0.500 h8 l-4,4 z" fill="#6a8ac0"/></svg>
<div style="left:248px;top:177.5px;width:2px;height:823.5px;background:#fff"></div>
<div style="left:250px;top:177.5px;width:1670px;height:823.5px;background:#d0deef"></div>
<div style="left:250px;top:178px;width:1670px;height:42px;background:linear-gradient(#f4f4f4,#d5d5d5 2.500px,#d4d4d4 38px,#8a8a8a)"></div>
<div style="left:250px;top:178px;width:389px;height:42px;background:#bfe3bc;border:2.500px solid #40a71e;box-shadow:inset 0 2px 2px rgba(255,255,255,.75),inset 0 -2px 2px rgba(40,70,40,.55)"></div>
<div class="t" style="top:190px;line-height:20px;font-size:15px;color:#1a1a1a;left:266px;">资本<span style="position:relative;left:2.500px">：</span></div>
<div class="t" style="top:190px;line-height:20px;font-size:15px;color:#1a1a1a;left:315px;letter-spacing:-0.5px">____USD</div>
<div class="t" style="top:190px;line-height:20px;font-size:15px;color:#1a1a1a;left:390px;">公用工程<span style="position:relative;left:2.500px">：</span></div>
<div class="t" style="top:190px;line-height:20px;font-size:15px;color:#1a1a1a;left:470.5px;letter-spacing:-0.100px">____USD/Year</div>
<div style="left:587px;top:189.5px;width:38px;height:20px;background:linear-gradient(#5e5454,#2a2020 55%,#120c0c);border-radius:10px"></div>
<div style="left:589.5px;top:192px;width:15px;height:15px;background:radial-gradient(circle at 45% 40%,#c4bcbc,#b4acac 70%,#a49c9c);border-radius:8px"></div>
<div style="left:640px;top:178px;width:356px;height:42px;background:#bfe1fd;border:2.500px solid #4179f6;box-shadow:inset 0 2px 2px rgba(255,255,255,.75),inset 0 -2px 2px rgba(60,80,220,.55)"></div>
<div style="left:639px;top:178px;width:1px;height:42px;background:#f4f4f4"></div>
<div style="left:996px;top:178px;width:1.5px;height:42px;background:#e8e8e8"></div>
<div class="t" style="top:190px;line-height:20px;font-size:15px;color:#1a1a1a;left:655px;letter-spacing:0.3px">能量节约 <span style="position:relative;left:2.500px">：</span></div>
<div class="t" style="top:190px;line-height:20px;font-size:15px;color:#1a1a1a;left:737.5px;letter-spacing:0.300px">____MW</div>
<div class="t" style="top:190px;line-height:20px;font-size:15px;color:#1a1a1a;left:815.5px;letter-spacing:0.400px">(____%)</div>
<div style="left:945px;top:189.5px;width:38px;height:20px;background:linear-gradient(#5e5454,#2a2020 55%,#120c0c);border-radius:10px"></div>
<div style="left:947.5px;top:192px;width:15px;height:15px;background:radial-gradient(circle at 45% 40%,#c4bcbc,#b4acac 70%,#a49c9c);border-radius:8px"></div>
<div style="left:997.5px;top:178px;width:345px;height:42px;background:#e8ceaa;border:2.500px solid #907e56;box-shadow:inset 0 2px 2px rgba(255,245,230,.7),inset 0 -2px 2px rgba(150,90,40,.7)"></div>
<div class="t" style="top:190px;line-height:20px;font-size:15px;color:#1a1a1a;left:1011px;letter-spacing:-0.3px">换热器-</div>
<div class="t" style="top:190px;line-height:20px;font-size:15px;color:#1a1a1a;left:1070px;">未知<span style="position:relative;left:2.500px">：</span></div>
<div class="t" style="top:190px;line-height:20px;font-size:15px;color:#1a1a1a;left:1122px;font-weight:700">5</div>
<div class="t" style="top:190px;line-height:20px;font-size:15px;color:#1a1a1a;left:1148px;">正常<span style="position:relative;left:2.500px">：</span></div>
<div class="t" style="top:190px;line-height:20px;font-size:15px;color:#1a1a1a;left:1200px;font-weight:700">0</div>
<div class="t" style="top:190px;line-height:20px;font-size:15px;color:#1a1a1a;left:1225px;">风险<span style="position:relative;left:2.500px">：</span></div>
<div class="t" style="top:190px;line-height:20px;font-size:15px;color:#1a1a1a;left:1278px;font-weight:700">0</div>
<div style="left:1300.5px;top:186px;width:32.5px;height:26px;background:linear-gradient(#f0dcc0,#e8ceaa 40%,#e4c8a0);border:1px solid #cdb48e;border-radius:3px"></div>
<svg style="left:1302px;top:187px;" width="23" height="23" viewBox="0 0 23 23"><circle cx="11.100" cy="11.400" r="9.700" fill="none" stroke="#2e8a2e" stroke-width="1.200"/><circle cx="11.100" cy="11.400" r="6.900" fill="#1fbf1f"/><ellipse cx="11.800" cy="8.800" rx="3.500" ry="2.500" fill="#6fe06f" fill-opacity="0.600"/><path d="M3,13.200 C5.500,11.500 7,9.500 9,10.200 C11,11 12,13.200 14,12.600 C16,12 17.500,10 19.500,9.800" fill="none" stroke="#101810" stroke-width="1.300"/></svg>
<svg style="left:1324px;top:201.5px;" width="8" height="5" viewBox="0 0 8 5"><path d="M0,0.400 h8 l-4,4.400 z" fill="#333"/></svg>
<svg style="left:1859px;top:187px;" width="13" height="10" viewBox="0 0 13 10"><path d="M1.500,2 L6.500,8.500 L11.500,2 L9,2 L6.500,5 L4,2 Z" fill="#fff" stroke="#444" stroke-width="1.700" stroke-linejoin="round"/></svg>
<svg style="left:1891px;top:185px;" width="14" height="13" viewBox="0 0 14 13"><path d="M1.500,1.500 L4.500,1.500 L7,4.300 L9.500,1.500 L12.500,1.500 L8.600,6.500 L12.500,11.500 L9.500,11.500 L7,8.700 L4.500,11.500 L1.500,11.500 L5.400,6.500 Z" fill="#fff" stroke="#444" stroke-width="1.700" stroke-linejoin="round"/></svg>
<div style="left:250px;top:244px;width:1670px;height:584px;background:#eef5fc;border:1px solid #8c9cb0;border-radius:3px 0 0 3px"></div>
<div style="left:253px;top:247px;width:1664px;height:578px;background:#c0d8f0"></div>
<div style="left:255px;top:249px;width:1660px;height:574px;background:#fff;border:1px solid #8a9cb4"></div>
<div style="left:259px;top:253px;width:1652px;height:566px;background:#bccde6;border:1px solid #8a9cb4"></div>
<div style="left:260px;top:284px;width:1650px;height:534px;background:linear-gradient(#f0f5fd,#d8e4f2)"></div>
<svg style="left:878px;top:225px;" width="285" height="20" viewBox="0 0 285 20"><path d="M0,19.500 C6,17 12,5 18,2 Q21,0.500 26,0.500 L281,0.500 Q284.5,0.500 284.5,4 L284.5,19.500 Z" fill="#dfe9f6"/><path d="M0,19.500 C6,17 12,5 18,2 Q21,0.500 26,0.500 L281,0.500 Q284.5,0.500 284.5,4 L284.5,19.500" fill="none" stroke="#9aa8bc" stroke-width="1"/></svg>
<svg style="left:369px;top:225px;" width="250" height="20" viewBox="0 0 250 20"><path d="M0,19.500 C6,17 12,5 18,2 Q21,0.500 26,0.500 L246,0.500 Q249.5,0.500 249.5,4 L249.5,19.500 Z" fill="#dfe9f6"/><path d="M0,19.500 C6,17 12,5 18,2 Q21,0.500 26,0.500 L246,0.500 Q249.5,0.500 249.5,4 L249.5,19.500" fill="none" stroke="#9aa8bc" stroke-width="1"/></svg>
<svg style="left:256px;top:225px;" width="125" height="20" viewBox="0 0 125 20"><path d="M0,19.500 C6,17 12,5 18,2 Q21,0.500 26,0.500 L121,0.500 Q124.5,0.500 124.5,4 L124.5,19.500 Z" fill="#dfe9f6"/><path d="M0,19.500 C6,17 12,5 18,2 Q21,0.500 26,0.500 L121,0.500 Q124.5,0.500 124.5,4 L124.5,19.500" fill="none" stroke="#9aa8bc" stroke-width="1"/></svg>
<svg style="left:608px;top:223px;" width="283" height="25" viewBox="0 0 283 25"><path d="M0,24 L0,21.800 L15,5.800 Q20,0.500 27,0.500 L279,0.500 Q282.5,0.500 282.5,4 L282.5,24 Z" fill="#bccde6"/><path d="M0,21.800 L15,5.800 Q20,0.500 27,0.500 L279,0.500 Q282.5,0.500 282.5,4 L282.5,21.500" fill="none" stroke="#8c9cb0" stroke-width="1"/></svg>
<div class="t" style="top:225px;line-height:20px;font-size:15px;color:#1a1a1a;left:278px;">主工艺流程</div>
<div class="t" style="top:225px;line-height:20px;font-size:15px;color:#1a1a1a;left:391px;letter-spacing:-0.25px">T0303 塔内件 INT-1 工段 CS-1</div>
<div class="t" style="top:225px;line-height:20px;font-size:15px;color:#000;left:623px;font-weight:700;letter-spacing:0.35px">T0303 塔内件 INT-1 - 塔水力学结果</div>
<div class="t" style="top:225px;line-height:20px;font-size:15px;color:#1a1a1a;left:899.3px;letter-spacing:-0.05px">T0303 塔内件 INT-1 - 水力学操作图</div>
<svg style="left:360px;top:230px;" width="10" height="10" viewBox="0 0 10 10"><path d="M1,1 L9,9 M9,1 L1,9" stroke="#a4a8ae" stroke-width="1.500"/></svg>
<svg style="left:598px;top:230px;" width="10" height="10" viewBox="0 0 10 10"><path d="M1,1 L9,9 M9,1 L1,9" stroke="#a4a8ae" stroke-width="1.500"/></svg>
<svg style="left:870px;top:230px;" width="10" height="10" viewBox="0 0 10 10"><path d="M1,1 L9,9 M9,1 L1,9" stroke="#a4a8ae" stroke-width="1.500"/></svg>
<svg style="left:1141px;top:230px;" width="10" height="10" viewBox="0 0 10 10"><path d="M1,1 L9,9 M9,1 L1,9" stroke="#a4a8ae" stroke-width="1.500"/></svg>
<div style="left:1166.5px;top:225.5px;width:17px;height:17px;background:linear-gradient(#f2f6fc,#dae7f8);border:1px solid #d8d4dc;border-radius:3.500px"></div>
<svg style="left:1168px;top:227px;" width="14" height="14" viewBox="0 0 14 14"><path d="M7,0.500 V13.500 M0.500,7 H13.500" stroke="#111" stroke-width="2"/></svg>
<svg style="left:1906px;top:229px;" width="11" height="6" viewBox="0 0 11 6"><path d="M0.500,0.500 h10 l-5,5 z" fill="#1f2f5a"/></svg>
<div style="left:274px;top:254px;width:99px;height:30px;background:#fff;border:1.500px solid #10109a;border-bottom:none;border-top:none;border-radius:3px 3px 0 0"></div>
<div class="t" style="top:260px;line-height:20px;font-size:15px;color:#1a1a1a;left:283px;">塔内件摘要</div>
<svg style="left:1880px;top:256px;" width="24" height="24" viewBox="0 0 24 24"><circle cx="12" cy="12" r="12" fill="#6aa8d8"/><text x="12" y="18.500" style="font-family:'Liberation Serif',serif;font-style:italic;font-weight:bold;font-size:20px" fill="#dcecfa" text-anchor="middle">i</text></svg>
<div style="left:1883px;top:289px;width:21px;height:522px;background:#c6d8f0"></div>
<div style="left:1883px;top:289px;width:21px;height:1px;background:#9ab0d0"></div>
<svg style="left:1888px;top:295px;" width="11" height="9" viewBox="0 0 11 9"><path d="M0.500,8 L5.500,1 L10.500,8 Z" fill="#34568a"/></svg>
<svg style="left:1888px;top:796px;" width="11" height="9" viewBox="0 0 11 9"><path d="M0.500,1 L5.500,8 L10.500,1 Z" fill="#34568a"/></svg>
<div style="left:1884px;top:310px;width:19px;height:472px;background:linear-gradient(90deg,#d4e2f6,#b8cce8 50%,#94acd4);border:1px solid #5a7aa8;border-radius:3px"></div>
<div style="left:1889px;top:541px;width:9px;height:1.5px;background:#5a6a88"></div>
<div style="left:1889px;top:544px;width:9px;height:1.5px;background:#5a6a88"></div>
<div style="left:1889px;top:547px;width:9px;height:1.5px;background:#5a6a88"></div>
<div style="left:1889px;top:550px;width:9px;height:1.5px;background:#5a6a88"></div>
<div style="left:1907px;top:431px;width:13px;height:74px;background:#3a4250;border-radius:4px 0 0 4px"></div>
<div style="left:1912px;top:441.0px;width:6px;height:2px;background:#555"></div>
<div style="left:1912px;top:444.5px;width:6px;height:2px;background:#555"></div>
<div style="left:1912px;top:448.0px;width:6px;height:2px;background:#555"></div>
<div style="left:1912px;top:451.5px;width:6px;height:2px;background:#e8843a"></div>
<div style="left:1912px;top:455.0px;width:6px;height:2px;background:#e89a3a"></div>
<div style="left:1912px;top:458.5px;width:6px;height:2px;background:#e8b03a"></div>
<div style="left:1912px;top:462.0px;width:6px;height:2px;background:#e8c83a"></div>
<div style="left:1912px;top:465.5px;width:6px;height:2px;background:#d8d03a"></div>
<div style="left:1912px;top:469.0px;width:6px;height:2px;background:#c0d040"></div>
<div style="left:1912px;top:472.5px;width:6px;height:2px;background:#a0d048"></div>
<div style="left:1912px;top:476.0px;width:6px;height:2px;background:#80d058"></div>
<div style="left:1912px;top:479.5px;width:6px;height:2px;background:#60d070"></div>
<div style="left:1912px;top:483.0px;width:6px;height:2px;background:#48d090"></div>
<div style="left:1912px;top:486.5px;width:6px;height:2px;background:#38d0b0"></div>
<div style="left:1912px;top:490.0px;width:6px;height:2px;background:#30c8c8"></div>
<div style="left:1912px;top:493.5px;width:6px;height:2px;background:#30c0d8"></div>
<div class="t" style="top:304px;line-height:20px;font-size:15px;color:#1a1a1a;left:276px;">摘要</div>
<div class="t" style="top:661px;line-height:20px;font-size:15px;color:#1a1a1a;left:276px;">塔段</div>
<div style="left:275px;top:327px;width:478px;height:303px;background:#fff;border:1px solid #cfd4da"></div>
<div style="left:276px;top:328px;width:26px;height:29px;background:linear-gradient(#ffffff 0,#ffffff 36%,#f3f3f3 38%,#eeeeee 100%);border-right:1px solid #dcdcdc"></div>
<div style="left:302px;top:328px;width:249px;height:29px;background:linear-gradient(#ffffff 0,#ffffff 36%,#f3f3f3 38%,#eeeeee 100%);border-right:1px solid #dcdcdc;border-left:1px solid #fff"></div>
<div style="left:551px;top:328px;width:100px;height:29px;background:linear-gradient(#ffffff 0,#ffffff 36%,#f3f3f3 38%,#eeeeee 100%);border-right:1px solid #dcdcdc;border-left:1px solid #fff"></div>
<div style="left:651px;top:328px;width:101px;height:29px;background:linear-gradient(#ffffff 0,#ffffff 36%,#f3f3f3 38%,#eeeeee 100%);border-left:1px solid #fff"></div>
<div class="t" style="top:334px;line-height:20px;font-size:15px;color:#1a1a1a;left:601px;transform:translateX(-50%);">值</div>
<div class="t" style="top:334px;line-height:20px;font-size:15px;color:#1a1a1a;left:701px;transform:translateX(-50%);">单位</div>
<div style="left:301px;top:357px;width:451px;height:33px;background:#ffffff;border-top:1px solid #e3e7ed"></div>
<div style="left:276px;top:357px;width:25px;height:33px;background:#fff;border-top:1px solid #e3e7ed"></div>
<div class="t" style="top:364px;line-height:20px;font-size:15px;color:#1a1a1a;left:307.8px;">塔板/填料级数</div>
<div class="t" style="top:364px;line-height:20px;font-size:15px;color:#1a1a1a;left:660px;letter-spacing:-0.200px"></div>
<div style="left:301px;top:390px;width:451px;height:35px;background:#f3f7fc;border-top:1px solid #e3e7ed"></div>
<div style="left:276px;top:390px;width:25px;height:35px;background:#fff;border-top:1px solid #e3e7ed"></div>
<div class="t" style="top:398px;line-height:20px;font-size:15px;color:#1a1a1a;left:307.8px;">总高度</div>
<div class="t" style="top:398px;line-height:20px;font-size:15px;color:#1a1a1a;right:1278px;letter-spacing:-0.450px">10.7</div>
<div class="t" style="top:398px;line-height:20px;font-size:15px;color:#1a1a1a;left:660px;letter-spacing:-0.200px">meter</div>
<svg style="left:284px;top:402.0px;" width="7" height="10" viewBox="0 0 7 10"><path d="M0.500,0.500 L6,5 L0.500,9.500 Z" fill="#ececec"/></svg>
<div style="left:301px;top:425px;width:451px;height:34px;background:#ffffff;border-top:1px solid #e3e7ed"></div>
<div style="left:276px;top:425px;width:25px;height:34px;background:#fff;border-top:1px solid #e3e7ed"></div>
<div class="t" style="top:432.5px;line-height:20px;font-size:15px;color:#1a1a1a;left:307.8px;letter-spacing:0.030px">总压头损失(热液相高度)</div>
<div class="t" style="top:432.5px;line-height:20px;font-size:15px;color:#1a1a1a;right:1278px;letter-spacing:-0.450px">1.68231</div>
<div class="t" style="top:432.5px;line-height:20px;font-size:15px;color:#1a1a1a;left:660px;letter-spacing:-0.200px">meter</div>
<svg style="left:284px;top:436.5px;" width="7" height="10" viewBox="0 0 7 10"><path d="M0.500,0.500 L6,5 L0.500,9.500 Z" fill="#ececec"/></svg>
<div style="left:301px;top:459px;width:451px;height:35px;background:#f3f7fc;border-top:1px solid #e3e7ed"></div>
<div style="left:276px;top:459px;width:25px;height:35px;background:#fff;border-top:1px solid #e3e7ed"></div>
<div class="t" style="top:467px;line-height:20px;font-size:15px;color:#1a1a1a;left:307.8px;">总压降</div>
<div class="t" style="top:467px;line-height:20px;font-size:15px;color:#1a1a1a;right:1278px;letter-spacing:-0.450px">0.122669</div>
<div class="t" style="top:467px;line-height:20px;font-size:15px;color:#1a1a1a;left:660px;letter-spacing:-0.200px">bar</div>
<svg style="left:284px;top:471.0px;" width="7" height="10" viewBox="0 0 7 10"><path d="M0.500,0.500 L6,5 L0.500,9.500 Z" fill="#ececec"/></svg>
<div style="left:301px;top:494px;width:451px;height:33px;background:#ffffff;border-top:1px solid #e3e7ed"></div>
<div style="left:276px;top:494px;width:25px;height:33px;background:#fff;border-top:1px solid #e3e7ed"></div>
<div class="t" style="top:501px;line-height:20px;font-size:15px;color:#1a1a1a;left:307.8px;">塔段数</div>
<div class="t" style="top:501px;line-height:20px;font-size:15px;color:#1a1a1a;right:1278px;letter-spacing:-0.450px">2</div>
<div class="t" style="top:501px;line-height:20px;font-size:15px;color:#1a1a1a;left:660px;letter-spacing:-0.200px"></div>
<svg style="left:284px;top:505.0px;" width="7" height="10" viewBox="0 0 7 10"><path d="M0.500,0.500 L6,5 L0.500,9.500 Z" fill="#ececec"/></svg>
<div style="left:301px;top:527px;width:451px;height:33px;background:#f3f7fc;border-top:1px solid #e3e7ed"></div>
<div style="left:276px;top:527px;width:25px;height:33px;background:#fff;border-top:1px solid #e3e7ed"></div>
<div class="t" style="top:534px;line-height:20px;font-size:15px;color:#1a1a1a;left:307.8px;">直径数</div>
<div class="t" style="top:534px;line-height:20px;font-size:15px;color:#1a1a1a;right:1278px;letter-spacing:-0.450px">1</div>
<div class="t" style="top:534px;line-height:20px;font-size:15px;color:#1a1a1a;left:660px;letter-spacing:-0.200px"></div>
<svg style="left:284px;top:538.0px;" width="7" height="10" viewBox="0 0 7 10"><path d="M0.500,0.500 L6,5 L0.500,9.500 Z" fill="#ececec"/></svg>
<div style="left:301px;top:560px;width:451px;height:34px;background:#ffffff;border-top:1px solid #e3e7ed"></div>
<div style="left:276px;top:560px;width:25px;height:34px;background:#fff;border-top:1px solid #e3e7ed"></div>
<div class="t" style="top:567.5px;line-height:20px;font-size:15px;color:#1a1a1a;left:307.8px;">塔釜压降</div>
<div class="t" style="top:567.5px;line-height:20px;font-size:15px;color:#1a1a1a;right:1278px;letter-spacing:-0.450px"></div>
<div class="t" style="top:567.5px;line-height:20px;font-size:15px;color:#1a1a1a;left:660px;letter-spacing:-0.200px">bar</div>
<svg style="left:284px;top:571.5px;" width="7" height="10" viewBox="0 0 7 10"><path d="M0.500,0.500 L6,5 L0.500,9.500 Z" fill="#ececec"/></svg>
<div style="left:301px;top:594px;width:451px;height:35px;background:#f3f7fc;border-top:1px solid #e3e7ed"></div>
<div style="left:276px;top:594px;width:25px;height:35px;background:#fff;border-top:1px solid #e3e7ed"></div>
<div class="t" style="top:602px;line-height:20px;font-size:15px;color:#1a1a1a;left:307.8px;">总停留时间</div>
<div class="t" style="top:602px;line-height:20px;font-size:15px;color:#1a1a1a;right:1278px;letter-spacing:-0.450px">0.0341105</div>
<div class="t" style="top:602px;line-height:20px;font-size:15px;color:#1a1a1a;left:660px;letter-spacing:-0.200px">hr</div>
<svg style="left:284px;top:606.0px;" width="7" height="10" viewBox="0 0 7 10"><path d="M0.500,0.500 L6,5 L0.500,9.500 Z" fill="#ececec"/></svg>
<div style="left:301px;top:328px;width:1px;height:301px;background:#e3e7ed"></div>
<div style="left:550px;top:328px;width:1px;height:301px;background:#e3e7ed"></div>
<div style="left:650px;top:328px;width:1px;height:301px;background:#e3e7ed"></div>
<div style="left:276px;top:357px;width:25px;height:33px;background:linear-gradient(90deg,#fffbe0,#fbe88a 50%,#f5cd1c)"></div>
<svg style="left:283px;top:368px;" width="8" height="11" viewBox="0 0 8 11"><path d="M0.500,0.500 L7,5.500 L0.500,10.500 Z" fill="#000"/></svg>
<div style="left:552px;top:358px;width:99px;height:31px;background:#fff;border:2px solid #f7d21e"></div>
<div style="left:554px;top:360px;width:95px;height:27px;border:1px solid #9a9a9a"></div>
<div class="t" style="top:363.5px;line-height:20px;font-size:15px;color:#1a1a1a;right:1281px;letter-spacing:-0.450px">25</div>
<div style="left:275px;top:685px;width:1102px;height:128px;background:#fff;border:1px solid #cfd4da"></div>
<div style="left:276px;top:686px;width:25px;height:66px;background:linear-gradient(#ffffff 0,#ffffff 36%,#f3f3f3 38%,#eeeeee 100%);border-right:1px solid #dcdcdc;border-left:1px solid #fff;"></div>
<div style="left:302px;top:686px;width:73px;height:66px;background:linear-gradient(#ffffff 0,#ffffff 36%,#f3f3f3 38%,#eeeeee 100%);border-right:1px solid #dcdcdc;border-left:1px solid #fff;"></div>
<div style="left:376px;top:686px;width:49px;height:66px;background:linear-gradient(#ffffff 0,#ffffff 36%,#f3f3f3 38%,#eeeeee 100%);border-right:1px solid #dcdcdc;border-left:1px solid #fff;"></div>
<div style="left:426px;top:686px;width:49px;height:66px;background:linear-gradient(#ffffff 0,#ffffff 36%,#f3f3f3 38%,#eeeeee 100%);border-right:1px solid #dcdcdc;border-left:1px solid #fff;"></div>
<div style="left:476px;top:686px;width:149px;height:27px;background:linear-gradient(#ffffff 0,#ffffff 36%,#f3f3f3 38%,#eeeeee 100%);border-right:1px solid #dcdcdc;border-left:1px solid #fff;border-bottom:1px solid #dcdcdc;"></div>
<div style="left:476px;top:714px;width:74px;height:38px;background:linear-gradient(#ffffff 0,#ffffff 36%,#f3f3f3 38%,#eeeeee 100%);border-right:1px solid #dcdcdc;border-left:1px solid #fff;"></div>
<div style="left:551px;top:714px;width:74px;height:38px;background:linear-gradient(#ffffff 0,#ffffff 36%,#f3f3f3 38%,#eeeeee 100%);border-right:1px solid #dcdcdc;border-left:1px solid #fff;"></div>
<div style="left:626px;top:686px;width:149px;height:27px;background:linear-gradient(#ffffff 0,#ffffff 36%,#f3f3f3 38%,#eeeeee 100%);border-right:1px solid #dcdcdc;border-left:1px solid #fff;border-bottom:1px solid #dcdcdc;"></div>
<div style="left:626px;top:714px;width:74px;height:38px;background:linear-gradient(#ffffff 0,#ffffff 36%,#f3f3f3 38%,#eeeeee 100%);border-right:1px solid #dcdcdc;border-left:1px solid #fff;"></div>
<div style="left:701px;top:714px;width:74px;height:38px;background:linear-gradient(#ffffff 0,#ffffff 36%,#f3f3f3 38%,#eeeeee 100%);border-right:1px solid #dcdcdc;border-left:1px solid #fff;"></div>
<div style="left:776px;top:686px;width:74px;height:66px;background:linear-gradient(#ffffff 0,#ffffff 36%,#f3f3f3 38%,#eeeeee 100%);border-right:1px solid #dcdcdc;border-left:1px solid #fff;"></div>
<div style="left:851px;top:686px;width:112px;height:66px;background:linear-gradient(#ffffff 0,#ffffff 36%,#f3f3f3 38%,#eeeeee 100%);border-right:1px solid #dcdcdc;border-left:1px solid #fff;"></div>
<div style="left:964px;top:686px;width:174px;height:27px;background:linear-gradient(#ffffff 0,#ffffff 36%,#f3f3f3 38%,#eeeeee 100%);border-right:1px solid #dcdcdc;border-left:1px solid #fff;border-bottom:1px solid #dcdcdc;"></div>
<div style="left:964px;top:714px;width:99px;height:38px;background:linear-gradient(#ffffff 0,#ffffff 36%,#f3f3f3 38%,#eeeeee 100%);border-right:1px solid #dcdcdc;border-left:1px solid #fff;"></div>
<div style="left:1064px;top:714px;width:74px;height:38px;background:linear-gradient(#ffffff 0,#ffffff 36%,#f3f3f3 38%,#eeeeee 100%);border-right:1px solid #dcdcdc;border-left:1px solid #fff;"></div>
<div style="left:1139px;top:686px;width:99px;height:66px;background:linear-gradient(#ffffff 0,#ffffff 36%,#f3f3f3 38%,#eeeeee 100%);border-right:1px solid #dcdcdc;border-left:1px solid #fff;"></div>
<div style="left:1239px;top:686px;width:61px;height:66px;background:linear-gradient(#ffffff 0,#ffffff 36%,#f3f3f3 38%,#eeeeee 100%);border-right:1px solid #dcdcdc;border-left:1px solid #fff;"></div>
<div style="left:1301px;top:686px;width:75px;height:66px;background:linear-gradient(#ffffff 0,#ffffff 36%,#f3f3f3 38%,#eeeeee 100%);border-right:1px solid #dcdcdc;border-left:1px solid #fff;"></div>
<div class="t" style="top:691px;line-height:20px;font-size:15px;color:#1a1a1a;left:401px;transform:translateX(-50%);">起始塔</div>
<div class="t" style="top:711.5px;line-height:20px;font-size:15px;color:#1a1a1a;left:401px;transform:translateX(-50%);">板</div>
<div class="t" style="top:691px;line-height:20px;font-size:15px;color:#1a1a1a;left:451px;transform:translateX(-50%);">结束塔</div>
<div class="t" style="top:711.5px;line-height:20px;font-size:15px;color:#1a1a1a;left:451px;transform:translateX(-50%);">板</div>
<div class="t" style="top:691px;line-height:20px;font-size:15px;color:#1a1a1a;left:551px;transform:translateX(-50%);">直径</div>
<div class="t" style="top:691px;line-height:20px;font-size:15px;color:#1a1a1a;left:701px;transform:translateX(-50%);">塔段高度</div>
<div class="t" style="top:691px;line-height:20px;font-size:15px;color:#1a1a1a;left:813px;transform:translateX(-50%);">内件类型</div>
<div class="t" style="top:691px;line-height:20px;font-size:15px;color:#1a1a1a;left:907px;transform:translateX(-50%);">塔板类型或填料</div>
<div class="t" style="top:711.5px;line-height:20px;font-size:15px;color:#1a1a1a;left:907px;transform:translateX(-50%);">类型</div>
<div class="t" style="top:691px;line-height:20px;font-size:15px;color:#1a1a1a;left:1051px;transform:translateX(-50%);">段压降</div>
<div class="t" style="top:691px;line-height:20px;font-size:15px;color:#1a1a1a;left:1188px;transform:translateX(-50%);">%液泛率</div>
<div class="t" style="top:691px;line-height:20px;font-size:15px;color:#1a1a1a;left:1270px;transform:translateX(-50%);">液泛率</div>
<div class="t" style="top:711.5px;line-height:20px;font-size:15px;color:#1a1a1a;left:1270px;transform:translateX(-50%);">最大塔</div>
<div class="t" style="top:732px;line-height:20px;font-size:15px;color:#1a1a1a;left:1270px;transform:translateX(-50%);">板</div>
<div style="left:301px;top:753px;width:1000px;height:29px;background:#ffffff;border-top:1px solid #e3e7ed"></div>
<div style="left:276px;top:753px;width:25px;height:29px;background:#fff;border-top:1px solid #e3e7ed"></div>
<svg style="left:284px;top:763.0px;" width="7" height="10" viewBox="0 0 7 10"><path d="M0.500,0.500 L6,5 L0.500,9.500 Z" fill="#ececec"/></svg>
<div class="t" style="top:759px;line-height:20px;font-size:15px;color:#1a1a1a;left:306px;letter-spacing:-0.450px">CS-1</div>
<div class="t" style="top:759px;line-height:20px;font-size:15px;color:#1a1a1a;right:1499px;letter-spacing:-0.450px">2</div>
<div class="t" style="top:759px;line-height:20px;font-size:15px;color:#1a1a1a;right:1448px;letter-spacing:-0.450px">16</div>
<div class="t" style="top:759px;line-height:20px;font-size:15px;color:#1a1a1a;right:1374px;letter-spacing:-0.450px">4</div>
<div class="t" style="top:760px;line-height:20px;font-size:15px;color:#1a1a1a;left:558px;letter-spacing:-0.200px">meter</div>
<div class="t" style="top:759px;line-height:20px;font-size:15px;color:#1a1a1a;right:1224px;letter-spacing:-0.450px">5.7</div>
<div class="t" style="top:760px;line-height:20px;font-size:15px;color:#1a1a1a;left:708px;letter-spacing:-0.200px">meter</div>
<div class="t" style="top:759px;line-height:20px;font-size:15px;color:#1a1a1a;left:781px;letter-spacing:-0.900px">TRAY</div>
<div class="t" style="top:759px;line-height:20px;font-size:14px;color:#1a1a1a;left:856px;letter-spacing:-0.750px">SIEVE</div>
<div class="t" style="top:759px;line-height:20px;font-size:15px;color:#1a1a1a;right:862px;letter-spacing:-0.450px">0.0666906</div>
<div class="t" style="top:760px;line-height:20px;font-size:15px;color:#1a1a1a;left:1070px;letter-spacing:-0.200px">bar</div>
<div class="t" style="top:759px;line-height:20px;font-size:15px;color:#1a1a1a;right:687px;letter-spacing:-0.450px">75.8923</div>
<div class="t" style="top:759px;line-height:20px;font-size:15px;color:#1a1a1a;right:624px;letter-spacing:-0.450px">3</div>
<div style="left:1301.5px;top:754px;width:74.5px;height:29px;background:linear-gradient(#f4f4f4,#ebebeb 48%,#dddddd 52%,#cfcfcf);border:1px solid #707070;border-radius:4px"></div>
<div class="t" style="top:759px;line-height:20px;font-size:15px;color:#1a1a1a;left:1338.5px;transform:translateX(-50%);">查看</div>
<div style="left:301px;top:782px;width:1000px;height:29px;background:#f3f7fc;border-top:1px solid #e3e7ed"></div>
<div style="left:276px;top:782px;width:25px;height:29px;background:#fff;border-top:1px solid #e3e7ed"></div>
<svg style="left:284px;top:792.0px;" width="7" height="10" viewBox="0 0 7 10"><path d="M0.500,0.500 L6,5 L0.500,9.500 Z" fill="#ececec"/></svg>
<div class="t" style="top:788px;line-height:20px;font-size:15px;color:#1a1a1a;left:306px;letter-spacing:-0.450px">CS-2</div>
<div class="t" style="top:788px;line-height:20px;font-size:15px;color:#1a1a1a;right:1499px;letter-spacing:-0.450px">17</div>
<div class="t" style="top:788px;line-height:20px;font-size:15px;color:#1a1a1a;right:1448px;letter-spacing:-0.450px">26</div>
<div class="t" style="top:788px;line-height:20px;font-size:15px;color:#1a1a1a;right:1374px;letter-spacing:-0.450px">4</div>
<div class="t" style="top:789px;line-height:20px;font-size:15px;color:#1a1a1a;left:558px;letter-spacing:-0.200px">meter</div>
<div class="t" style="top:788px;line-height:20px;font-size:15px;color:#1a1a1a;right:1224px;letter-spacing:-0.450px">5</div>
<div class="t" style="top:789px;line-height:20px;font-size:15px;color:#1a1a1a;left:708px;letter-spacing:-0.200px">meter</div>
<div class="t" style="top:788px;line-height:20px;font-size:15px;color:#1a1a1a;left:781px;letter-spacing:-0.900px">TRAY</div>
<div class="t" style="top:788px;line-height:20px;font-size:14px;color:#1a1a1a;left:856px;letter-spacing:-0.750px">SIEVE</div>
<div class="t" style="top:788px;line-height:20px;font-size:15px;color:#1a1a1a;right:862px;letter-spacing:-0.450px">0.0559784</div>
<div class="t" style="top:789px;line-height:20px;font-size:15px;color:#1a1a1a;left:1070px;letter-spacing:-0.200px">bar</div>
<div class="t" style="top:788px;line-height:20px;font-size:15px;color:#1a1a1a;right:687px;letter-spacing:-0.450px">70.8146</div>
<div class="t" style="top:788px;line-height:20px;font-size:15px;color:#1a1a1a;right:624px;letter-spacing:-0.450px">18</div>
<div style="left:1301.5px;top:783px;width:74.5px;height:29px;background:linear-gradient(#f4f4f4,#ebebeb 48%,#dddddd 52%,#cfcfcf);border:1px solid #707070;border-radius:4px"></div>
<div class="t" style="top:788px;line-height:20px;font-size:15px;color:#1a1a1a;left:1338.5px;transform:translateX(-50%);">查看</div>
<div style="left:301px;top:753px;width:1px;height:58px;background:#e3e7ed"></div>
<div style="left:375px;top:753px;width:1px;height:58px;background:#e3e7ed"></div>
<div style="left:425px;top:753px;width:1px;height:58px;background:#e3e7ed"></div>
<div style="left:475px;top:753px;width:1px;height:58px;background:#e3e7ed"></div>
<div style="left:625px;top:753px;width:1px;height:58px;background:#e3e7ed"></div>
<div style="left:775px;top:753px;width:1px;height:58px;background:#e3e7ed"></div>
<div style="left:850px;top:753px;width:1px;height:58px;background:#e3e7ed"></div>
<div style="left:963px;top:753px;width:1px;height:58px;background:#e3e7ed"></div>
<div style="left:1138px;top:753px;width:1px;height:58px;background:#e3e7ed"></div>
<div style="left:1238px;top:753px;width:1px;height:58px;background:#e3e7ed"></div>
<div style="left:1300px;top:753px;width:1px;height:58px;background:#e3e7ed"></div>
<div style="left:251px;top:828px;width:1669px;height:10px;background:#c9d9ee"></div>
<div style="left:250px;top:833px;width:1669px;height:168px;background:#dfeaf7;border:1px solid #a2b0c6"></div>
<div style="left:251px;top:834px;width:1667px;height:29px;background:#dfeaf7"></div>
<div class="t" style="top:840px;line-height:20px;font-size:15px;color:#5b78c0;left:256px;">模型选项版</div>
<svg style="left:1860px;top:844px;" width="11" height="6" viewBox="0 0 11 6"><path d="M0.500,0.500 h10 l-5,5 z" fill="#5a72c8"/></svg>
<svg style="left:1880px;top:838px;" width="11" height="14" viewBox="0 0 11 14"><path d="M3,1 h5 M4,1 v6 M7.500,1 v6 M1.500,7.500 h8 M5.500,8 v5" fill="none" stroke="#5a72c8" stroke-width="1.400"/></svg>
<svg style="left:1901px;top:840px;" width="10" height="10" viewBox="0 0 10 10"><path d="M1,1 L9,9 M9,1 L1,9" stroke="#5a72c8" stroke-width="1.600"/></svg>
<div style="left:251px;top:863px;width:1667px;height:137px;background:#c4d6ee"></div>
<div style="left:368px;top:865px;width:1548px;height:34px;background:#bccde6"></div>
<div style="left:368px;top:899px;width:1547px;height:98px;background:linear-gradient(#f0f5fd,#d8e4f2)"></div>
<div style="left:385px;top:867px;width:131px;height:32px;background:#f0f5fd;border-radius:4px 4px 0 0"></div>
<div class="t" style="top:874px;line-height:20px;font-size:15px;color:#27456e;left:450px;transform:translateX(-50%);">混合器/分流器</div>
<div class="t" style="top:874px;line-height:20px;font-size:15px;color:#27456e;left:558px;transform:translateX(-50%);">分离器</div>
<div class="t" style="top:874px;line-height:20px;font-size:15px;color:#27456e;left:641px;transform:translateX(-50%);">换热器</div>
<div class="t" style="top:874px;line-height:20px;font-size:15px;color:#27456e;left:708px;transform:translateX(-50%);">塔</div>
<div class="t" style="top:874px;line-height:20px;font-size:15px;color:#27456e;left:776px;transform:translateX(-50%);">反应器</div>
<div class="t" style="top:874px;line-height:20px;font-size:15px;color:#27456e;left:880px;transform:translateX(-50%);">压力变送设备</div>
<div class="t" style="top:874px;line-height:20px;font-size:15px;color:#27456e;left:986px;transform:translateX(-50%);">操纵器</div>
<div class="t" style="top:874px;line-height:20px;font-size:15px;color:#27456e;left:1061px;transform:translateX(-50%);">固体</div>
<div class="t" style="top:874px;line-height:20px;font-size:15px;color:#27456e;left:1151px;transform:translateX(-50%);">固体分离器</div>
<div class="t" style="top:874px;line-height:20px;font-size:15px;color:#27456e;left:1255px;transform:translateX(-50%);">间歇模型</div>
<div class="t" style="top:874px;line-height:20px;font-size:15px;color:#27456e;left:1353px;transform:translateX(-50%);">用户模型</div>
<div style="left:256px;top:873px;width:25px;height:25px;background:#fbfdff;border:1.500px solid #1a8a1a"></div>
<svg style="left:260px;top:877px;" width="15" height="17" viewBox="0 0 15 17"><path d="M1,0.500 L1,12 L4,9.500 L7,15.500 L9.500,14.200 L6.500,8.500 L10.500,8.500 Z" fill="#000"/></svg>
<div style="left:256px;top:903px;width:88px;height:87px;background:#dfe7f8;border:1px solid #8a8a8a"></div>
<svg style="left:270px;top:925px;" width="62" height="22" viewBox="0 0 62 22"><path d="M1,11 H21 M40,11 H56 M51,5 L57,11 L51,17" fill="none" stroke="#333" stroke-width="1"/><rect x="21" y="1.500" width="19" height="19" fill="none" stroke="#333" stroke-width="1"/></svg>
<div class="t" style="top:969px;line-height:20px;font-size:15px;color:#1a1a1a;left:297px;transform:translateX(-50%);">物料</div>
<svg style="left:349px;top:942.8px;" width="12" height="7" viewBox="0 0 12 7"><path d="M0.500,0.500 h11 l-5.500,6 z" fill="#111"/></svg>
<div style="left:374px;top:905px;width:20px;height:86px;background:#f1f1f1;border:1px solid #c0c0c0;border-radius:4px"></div>
<svg style="left:377px;top:916px;" width="14" height="62" viewBox="0 0 14 62"><path d="M13,1 L1,31 L13,61 Z" fill="#a8a8a8"/></svg>
<div style="left:399px;top:904px;width:87px;height:87px;background:#dfe7f8;border:1px solid #8a8a8a"></div>
<div style="left:513px;top:904px;width:87px;height:87px;background:#dfe7f8;border:1px solid #8a8a8a"></div>
<div style="left:626px;top:904px;width:88px;height:87px;background:#dfe7f8;border:1px solid #8a8a8a"></div>
<svg style="left:424px;top:908px;" width="36" height="58" viewBox="0 0 36 58"><path d="M0.500,0.500 L35,29 L0.500,57.500 Z" fill="url(#gCone)" stroke="#33332a" stroke-width="0.800"/></svg>
<div class="t" style="top:970px;line-height:20px;font-size:15px;color:#1a1a1a;left:439px;transform:translateX(-50%);letter-spacing:-0.300px">Mixer</div>
<svg style="left:491px;top:942.8px;" width="12" height="7" viewBox="0 0 12 7"><path d="M0.500,0.500 h11 l-5.500,6 z" fill="#111"/></svg>
<svg style="left:538px;top:908px;" width="36" height="58" viewBox="0 0 36 58"><path d="M35.500,0.500 L1,29 L35.500,57.500 Z" fill="url(#gCone)" stroke="#33332a" stroke-width="0.800"/></svg>
<div class="t" style="top:970px;line-height:20px;font-size:15px;color:#1a1a1a;left:553px;transform:translateX(-50%);letter-spacing:-0.300px">FSplit</div>
<svg style="left:605px;top:942.8px;" width="12" height="7" viewBox="0 0 12 7"><path d="M0.500,0.500 h11 l-5.500,6 z" fill="#111"/></svg>
<svg style="left:640px;top:906px;" width="60" height="62" viewBox="0 0 60 62"><rect x="26.300" y="2" width="16.500" height="8" rx="1.500" fill="url(#gMetal2)"/><rect x="2" y="9.300" width="13" height="12.200" rx="2" fill="url(#gMetal2)"/><path d="M13,9.300 H56.600 V40 L41.400,54.700 H28 L13,40 Z" fill="url(#gMetal2)"/><path d="M13,40 H56.600 L41.400,54.700 H28 Z" fill="#b8b8a4" fill-opacity="0.450"/><rect x="28" y="54.500" width="13.400" height="5" rx="1.500" fill="url(#gMetal2)"/><path d="M13,21.300 h17" stroke="#222" stroke-width="1"/></svg>
<div class="t" style="top:970px;line-height:20px;font-size:15px;color:#1a1a1a;left:667px;transform:translateX(-50%);letter-spacing:-0.300px">SSplit</div>
<svg style="left:719px;top:942.8px;" width="12" height="7" viewBox="0 0 12 7"><path d="M0.500,0.500 h11 l-5.500,6 z" fill="#111"/></svg>
<div style="left:1890px;top:904px;width:20px;height:87px;background:#f4f4f4;border:1px solid #c8c8c8;border-radius:4px"></div>
<svg style="left:1893px;top:917px;" width="14" height="62" viewBox="0 0 14 62"><path d="M1,1 L13,31 L1,61 Z" fill="#a8a8a8"/></svg>
<div style="left:0px;top:1001px;width:1920px;height:31px;background:#b4c3db;border-top:1px solid #a4b4cc"></div>
<div class="t" style="top:1007px;line-height:20px;font-size:15px;color:#111;left:3.8px;letter-spacing:0px">结果可供查询</div>
<div class="t" style="top:1007px;line-height:20px;font-size:15px;color:#111;left:106.5px;letter-spacing:0.400px">(尚未运行问题)</div>
<div style="left:225px;top:1001.5px;width:94px;height:28px;background:linear-gradient(#f8f8f8,#ececec 48%,#dedede 52%,#d2d2d2);border:1px solid #8a8a8a;border-radius:4px"></div>
<div class="t" style="top:1007px;line-height:20px;font-size:15px;color:#111;left:272px;transform:translateX(-50%);">检查状态</div>
<div class="t" style="top:1007px;line-height:20px;font-size:15px;color:#484848;left:1654.5px;letter-spacing:0.200px">100%</div>
<svg style="left:1715px;top:1007px;" width="17" height="17" viewBox="0 0 17 17"><circle cx="8.500" cy="8.500" r="7.500" fill="none" stroke="#333" stroke-width="1.400"/><path d="M4.500,8.500 h8" stroke="#333" stroke-width="2"/></svg>
<div style="left:1740px;top:1009px;width:150px;height:4px;background:#f0f0f0;border-radius:2px"></div>
<svg style="left:1809px;top:1002px;" width="12" height="22" viewBox="0 0 12 22"><path d="M1,2 Q1,0.500 2.500,0.500 H9.500 Q11,0.500 11,2 V15 L6,21 L1,15 Z" fill="#e8e8e8" stroke="#8a8a8a"/></svg>
<svg style="left:1897px;top:1007px;" width="17" height="17" viewBox="0 0 17 17"><circle cx="8.500" cy="8.500" r="7.500" fill="none" stroke="#333" stroke-width="1.400"/><path d="M4.500,8.500 h8 M8.500,4.500 v8" stroke="#333" stroke-width="2"/></svg>
<div style="left:0px;top:1030.3px;width:1920px;height:2px;background:#fff"></div>
<div style="left:0px;top:1030.3px;width:60px;height:2px;background:#1c2a1c"></div>
<div style="left:490px;top:1030.3px;width:1430px;height:2px;background:#1c1c1c"></div>
<div style="left:633px;top:1030.3px;width:57px;height:2px;background:#6a6a6a"></div>
<div style="left:1068px;top:1030.3px;width:62px;height:2px;background:#5a5a5a"></div>
</body></html>
